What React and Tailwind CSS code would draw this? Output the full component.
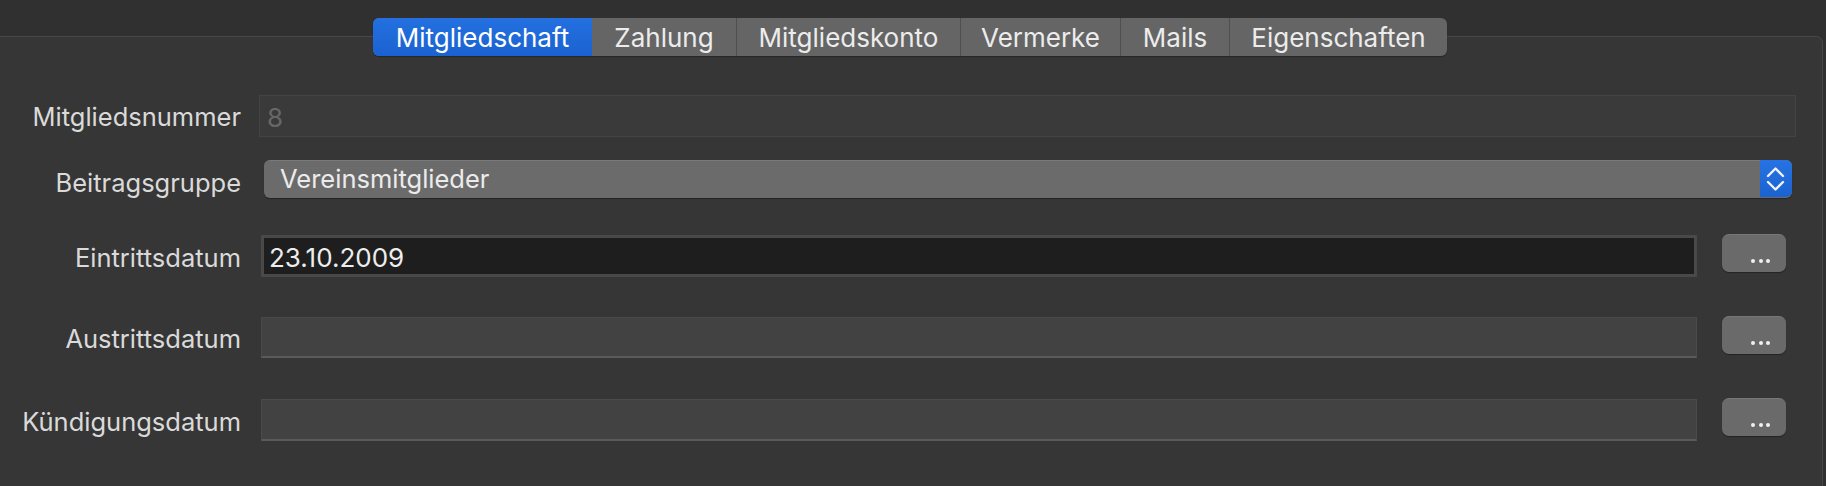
import React from 'react';

const tabs = [
  { name: 'Mitgliedschaft', w: 'w-[219px]', active: true },
  { name: 'Zahlung', w: 'w-[144px]' },
  { name: 'Mitgliedskonto', w: 'w-[224px]' },
  { name: 'Vermerke', w: 'w-[160px]' },
  { name: 'Mails', w: 'w-[109px]' },
  { name: 'Eigenschaften', w: 'w-[218px]' },
];

function Label({ children, mt }) {
  return (
    <div className={`w-[241px] shrink-0 text-right text-[25.5px] leading-[32px] text-[#dadada] ${mt}`}>
      {children}
    </div>
  );
}

function DotsButton() {
  return (
    <button className="ml-[25px] w-[64px] h-[38px] shrink-0 rounded-[7px] bg-[#6a6a6a] border-t border-[#777777] shadow-[0_1px_1px_rgba(0,0,0,0.35)] flex items-end justify-end pr-[16px] pb-[9px] gap-[3.5px]">
      <span className="w-[4px] h-[4px] rounded-full bg-[#f0f0f0]"></span>
      <span className="w-[4px] h-[4px] rounded-full bg-[#f0f0f0]"></span>
      <span className="w-[4px] h-[4px] rounded-full bg-[#f0f0f0]"></span>
    </button>
  );
}

export default function App() {
  return (
    <div className="w-full h-[486px] overflow-hidden bg-[#303030] pt-[18px] font-['Inter',sans-serif]">
      {/* Segmented tab control */}
      <div className="relative z-10 flex justify-center pr-[6px]">
        <div className="flex h-[38px] rounded-[6px] bg-[#656565] shadow-[0_1px_1px_rgba(0,0,0,0.3)] overflow-hidden">
          {tabs.map((t, i) => (
            <div
              key={t.name}
              className={`${t.w} h-full flex items-center justify-center text-[26px] ${
                t.active
                  ? 'bg-gradient-to-b from-[#2470e0] to-[#1a62d0] text-white'
                  : 'text-[#ececec]'
              } ${i > 1 ? 'border-l border-[#4f4f4f]' : ''}`}
            >
              {t.name}
            </div>
          ))}
        </div>
      </div>

      {/* Content box */}
      <div className="-mt-[20px] -ml-[4px] mr-[3px] h-[480px] bg-[#363636] border-t border-r border-[#474747] rounded-tr-[7px] pl-[4px] pt-[58px]">
        {/* Mitgliedsnummer */}
        <div className="flex items-start h-[42px]">
          <Label mt="mt-[6px]">Mitgliedsnummer</Label>
          <div className="ml-[18px] w-[1537px] h-[42px] bg-[#3a3a3a] border border-[#444444] flex items-center pl-[7px] pt-[3px] text-[26px] text-[#676767]">
            8
          </div>
        </div>

        {/* Beitragsgruppe */}
        <div className="flex items-start h-[38px] mt-[23px]">
          <Label mt="mt-[7px]">Beitragsgruppe</Label>
          <div className="ml-[23px] w-[1528px] h-[38px] flex rounded-[6px] bg-[#6b6b6b] border-t border-[#7a7a7a] shadow-[0_1px_1px_rgba(0,0,0,0.35)]">
            <div className="flex-1 flex items-center pl-[16px] text-[25.5px] text-[#ebebeb]">
              Vereinsmitglieder
            </div>
            <div className="w-[32px] h-full -mt-px rounded-r-[6px] bg-gradient-to-b from-[#2773e3] to-[#1a62d0] flex items-center justify-center">
              <svg width="32" height="38" viewBox="0 0 32 38" fill="none">
                <path d="M8 16 L15.5 8.5 L23 16" stroke="#eef3fd" strokeWidth="2.4" strokeLinecap="round" strokeLinejoin="round" />
                <path d="M8 22 L15.5 29.5 L23 22" stroke="#eef3fd" strokeWidth="2.4" strokeLinecap="round" strokeLinejoin="round" />
              </svg>
            </div>
          </div>
        </div>

        {/* Eintrittsdatum */}
        <div className="flex items-start h-[43px] mt-[36px]">
          <Label mt="mt-[8px]">Eintrittsdatum</Label>
          <div className="mt-px ml-[20px] w-[1436px] h-[42px] bg-[#1e1e1e] border-[3px] border-[#494949] flex items-center pl-[5px] pt-[3px] text-[26px] text-[#ededed]">
            23.10.2009
          </div>
          <DotsButton />
        </div>

        {/* Austrittsdatum */}
        <div className="flex items-start h-[42px] mt-[39px]">
          <Label mt="mt-[7px]">Austrittsdatum</Label>
          <div className="mt-px ml-[20px] w-[1436px] h-[41px] bg-[#424242] border border-[#4a4a4a] border-b-2 border-b-[#5a5a5a]"></div>
          <DotsButton />
        </div>

        {/* Kündigungsdatum */}
        <div className="flex items-start h-[43px] mt-[40px]">
          <Label mt="mt-[8px]">Kündigungsdatum</Label>
          <div className="mt-px ml-[20px] w-[1436px] h-[42px] bg-[#424242] border border-[#4a4a4a] border-b-2 border-b-[#5a5a5a]"></div>
          <DotsButton />
        </div>
      </div>
    </div>
  );
}
